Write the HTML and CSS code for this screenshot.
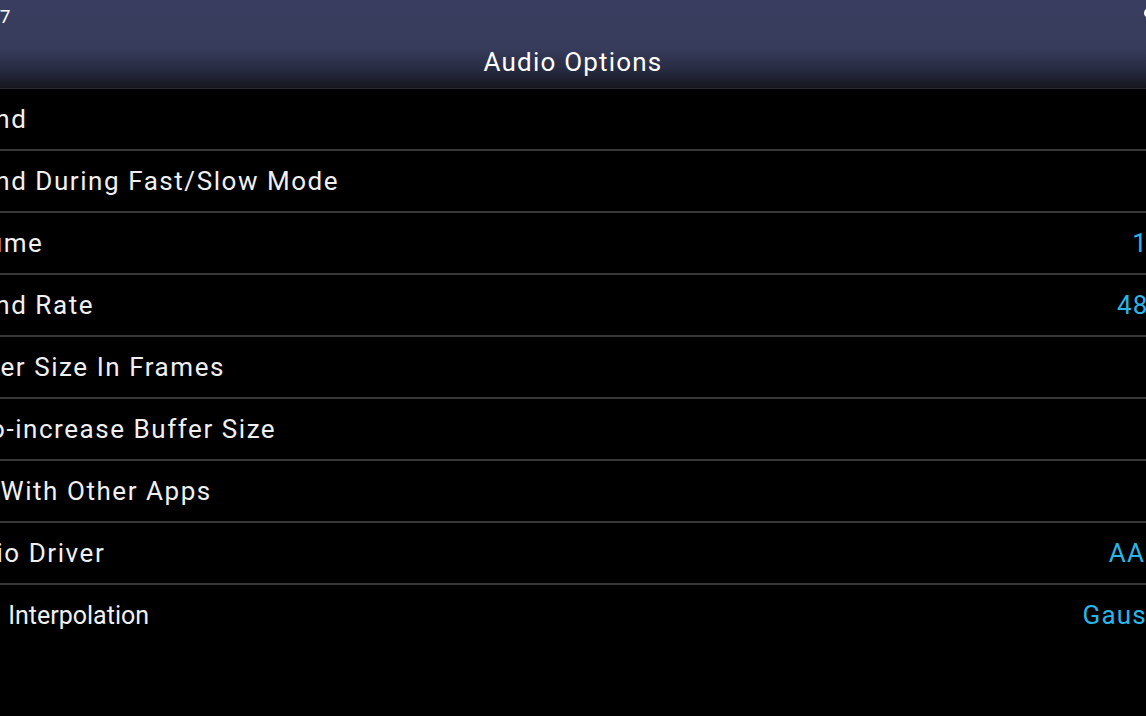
FILE: index.html
```html
<!DOCTYPE html>
<html lang="en">
<head>
    <meta name="viewport" content="width=device-width, initial-scale=1.0">
    <title>Audio Options</title>
    <link rel="stylesheet" href="styles.css">
</head>
<body>
<div id="screen">
    <div id="header">
        <div id="status">
            <span class="clock">12:47</span>
            <span class="tray"></span>
        </div>
        <div id="title">Audio Options</div>
    </div>

    <div id="menu">
        <div class="row"><span class="label">Sound</span></div>
        <div class="row"><span class="label">Sound During Fast/Slow Mode</span></div>
        <div class="row"><span class="label">Volume</span><span class="value">100%</span></div>
        <div class="row"><span class="label">Sound Rate</span><span class="value">48KHz</span></div>
        <div class="row"><span class="label">Buffer Size In Frames</span></div>
        <div class="row"><span class="label">Auto-increase Buffer Size</span></div>
        <div class="row"><span class="label">Mix With Other Apps</span></div>
        <div class="row"><span class="label">Audio Driver</span><span class="value">AAudio</span></div>
        <div class="row"><span class="label narrow">DSP Interpolation</span><span class="value">Gaussian</span></div>
    </div>
</div>
</body>
</html>
```

FILE: styles.css
```css
body {
    margin: 0;
    padding: 0;
    background-color: #000000;
    font-family: Roboto, "Noto Sans", sans-serif;
    color: #f2f2f2;
    overflow: hidden;
    height: 716px;
}

/* the screen is wider than the window, both edges are cut off */
#screen {
    margin: 0 -54px;
}

#header {
    height: 88px;
    background: linear-gradient(to bottom, #393e60 0%, #373c5c 55%, #262a40 80%, #15161d 100%);
    border-bottom: 1px solid #2a2a2e;
    display: flex;
    flex-direction: column;
}

#status {
    display: flex;
    justify-content: space-between;
    align-items: center;
    height: 36px;
}

.clock {
    font-size: 19px;
    color: #ffffff;
    margin-left: 17px;
    margin-top: -4px;
}

.tray {
    width: 10px;
    height: 10px;
    border-radius: 50%;
    background-color: #ffffff;
    margin-right: 46px;
    margin-top: -10px;
}

#title {
    text-align: center;
    font-size: 26px;
    letter-spacing: 1.2px;
    color: #ffffff;
    margin-top: 11px;
}

.row {
    height: 60px;
    border-bottom: 2px solid #383838;
    display: flex;
    justify-content: space-between;
    align-items: center;
    font-size: 26px;
}

.row:last-child {
    border-bottom: none;
}

.label {
    letter-spacing: 1.55px;
    color: #f0f0f0;
}

.label.narrow {
    font-size: 25px;
    letter-spacing: 0;
    word-spacing: 4px;
    margin-left: 5px;
}

.value {
    color: #2bb5e6;
    letter-spacing: 1.2px;
}
```
